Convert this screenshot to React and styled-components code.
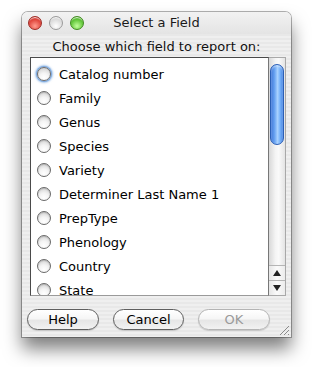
import React from "react";
import styled, { createGlobalStyle } from "styled-components";

const Global = createGlobalStyle`
  html, body { margin: 0; padding: 0; background: #ffffff; }
  body { font-family: "DejaVu Sans", "Liberation Sans", sans-serif; }
`;

const Page = styled.div`
  width: 312px;
  height: 367px;
  padding: 12px 0 0 22px;
  box-sizing: border-box;
  background: #ffffff;
`;

const Window = styled.div`
  width: 269px;
  height: 325px;
  display: flex;
  flex-direction: column;
  border-radius: 6px 6px 0 0;
  box-shadow: 0 12px 18px rgba(0, 0, 0, 0.5), 0 0 0 1px rgba(0, 0, 0, 0.3);
  background: repeating-linear-gradient(
    to bottom,
    #efefef 0px,
    #efefef 2px,
    #e8e8e8 2px,
    #e8e8e8 4px
  );
  overflow: hidden;
`;

const TitleBar = styled.div`
  height: 22px;
  flex: none;
  display: flex;
  align-items: center;
  position: relative;
  padding-left: 6px;
  gap: 7px;
  background: linear-gradient(to bottom, #f2f2f2 0%, #e4e4e4 100%);
`;

const Light = styled.span`
  width: 14px;
  height: 14px;
  border-radius: 50%;
  box-sizing: border-box;
  border: 1px solid ${(p) => p.$edge};
  background: radial-gradient(circle at 50% 75%, ${(p) => p.$glow} 0%, ${(p) => p.$base} 60%, ${(p) => p.$dark} 100%);
  box-shadow: inset 0 2px 1px -1px rgba(255, 255, 255, 0.9);
`;

const Title = styled.div`
  position: absolute;
  left: 0;
  right: 0;
  top: 0;
  height: 22px;
  line-height: 22px;
  text-align: center;
  font-size: 13px;
  color: #1a1a1a;
  pointer-events: none;
`;

const Prompt = styled.div`
  height: 23px;
  flex: none;
  text-align: center;
  line-height: 26px;
  font-size: 13px;
  color: #111;
`;

const ListArea = styled.div`
  margin-left: 8px;
  width: 256px;
  height: 239px;
  flex: none;
  display: flex;
`;

const List = styled.div`
  flex: 1;
  background: #fff;
  border: 1px solid #4a4a4a;
  border-right-color: #777;
  border-bottom-color: #9a9a9a;
  padding-top: 4px;
  overflow: hidden;
  display: flex;
  flex-direction: column;
`;

const Row = styled.div`
  height: 24px;
  flex: none;
  display: flex;
  align-items: center;
  padding-left: 6px;
  gap: 8px;
  font-size: 13px;
  color: #000;
`;

const Radio = styled.span`
  width: 14px;
  height: 14px;
  flex: none;
  box-sizing: border-box;
  border-radius: 50%;
  border: 1px solid #6a6a6a;
  background: radial-gradient(circle at 50% 80%, #ffffff 0%, #f4f4f4 40%, #c8c8c8 100%);
  box-shadow: ${(p) =>
    p.$focus
      ? "0 0 0 1px #7fa9dd, 0 0 2px 2px rgba(90, 150, 220, 0.55)"
      : "inset 0 1px 1px rgba(0,0,0,0.15)"};
`;

const Scrollbar = styled.div`
  width: 16px;
  flex: none;
  display: flex;
  flex-direction: column;
  border: 1px solid #a8a8a8;
  border-left: none;
  background: linear-gradient(to right, #d8d8d8 0%, #f4f4f4 40%, #fafafa 60%, #e4e4e4 100%);
`;

const Track = styled.div`
  flex: 1;
  padding: 6px 1px 0 1px;
`;

const Thumb = styled.div`
  height: 81px;
  border-radius: 7px;
  border: 1px solid #2b5fb6;
  box-sizing: border-box;
  background: linear-gradient(
    to right,
    #3a74d8 0%,
    #6aa4f2 30%,
    #a9d2ff 55%,
    #78b3fa 75%,
    #3f7fe0 100%
  );
  box-shadow: inset 0 1px 2px rgba(255,255,255,0.6);
`;

const Arrow = styled.div`
  height: 14px;
  flex: none;
  display: flex;
  align-items: center;
  justify-content: center;
  border-top: 1px solid #b5b5b5;
  background: linear-gradient(to right, #e6e6e6 0%, #fbfbfb 50%, #ececec 100%);
`;

const Footer = styled.div`
  flex: 1;
  position: relative;
  display: flex;
  align-items: flex-start;
  padding: 13px 0 0 5px;
  gap: 14px;
`;

const Button = styled.button`
  width: ${(p) => p.$w}px;
  height: 21px;
  border-radius: 11px;
  box-sizing: border-box;
  border: 1px solid ${(p) => (p.disabled ? "#b4b4b4" : "#5f5f5f")};
  background: linear-gradient(
    to bottom,
    #ffffff 0%,
    #f6f6f6 45%,
    #e6e6e6 55%,
    #f2f2f2 100%
  );
  box-shadow: 0 1px 1px rgba(0, 0, 0, 0.15);
  font-family: inherit;
  font-size: 13px;
  color: ${(p) => (p.disabled ? "#9a9a9a" : "#000")};
  padding: 0;
  line-height: 19px;
`;

const Grip = styled.svg`
  position: absolute;
  right: 1px;
  bottom: 1px;
`;

const fields = [
  "Catalog number",
  "Family",
  "Genus",
  "Species",
  "Variety",
  "Determiner Last Name 1",
  "PrepType",
  "Phenology",
  "Country",
  "State",
];

export default function App() {
  return (
    <>
      <Global />
      <Page>
        <Window>
          <TitleBar>
            <Light $edge="#9c2a24" $base="#e0443b" $glow="#ff9c8f" $dark="#b52a22" />
            <Light $edge="#9a9a9a" $base="#dcdcdc" $glow="#ffffff" $dark="#c4c4c4" />
            <Light $edge="#3f8a1e" $base="#5fc436" $glow="#c2ff9c" $dark="#3f9c1f" />
            <Title>Select a Field</Title>
          </TitleBar>
          <Prompt>Choose which field to report on:</Prompt>
          <ListArea>
            <List>
              {fields.map((f, i) => (
                <Row key={f}>
                  <Radio $focus={i === 0} />
                  <span>{f}</span>
                </Row>
              ))}
            </List>
            <Scrollbar>
              <Track>
                <Thumb />
              </Track>
              <Arrow>
                <svg width="8" height="6" viewBox="0 0 8 6">
                  <polygon points="4,0 8,6 0,6" fill="#222" />
                </svg>
              </Arrow>
              <Arrow>
                <svg width="8" height="6" viewBox="0 0 8 6">
                  <polygon points="0,0 8,0 4,6" fill="#222" />
                </svg>
              </Arrow>
            </Scrollbar>
          </ListArea>
          <Footer>
            <Button $w={72}>Help</Button>
            <Button $w={71}>Cancel</Button>
            <Button $w={72} disabled>OK</Button>
            <Grip width="11" height="11" viewBox="0 0 11 11">
              <line x1="10" y1="1" x2="1" y2="10" stroke="#8a8a8a" />
              <line x1="10" y1="5" x2="5" y2="10" stroke="#8a8a8a" />
              <line x1="10" y1="9" x2="9" y2="10" stroke="#8a8a8a" />
            </Grip>
          </Footer>
        </Window>
      </Page>
    </>
  );
}
